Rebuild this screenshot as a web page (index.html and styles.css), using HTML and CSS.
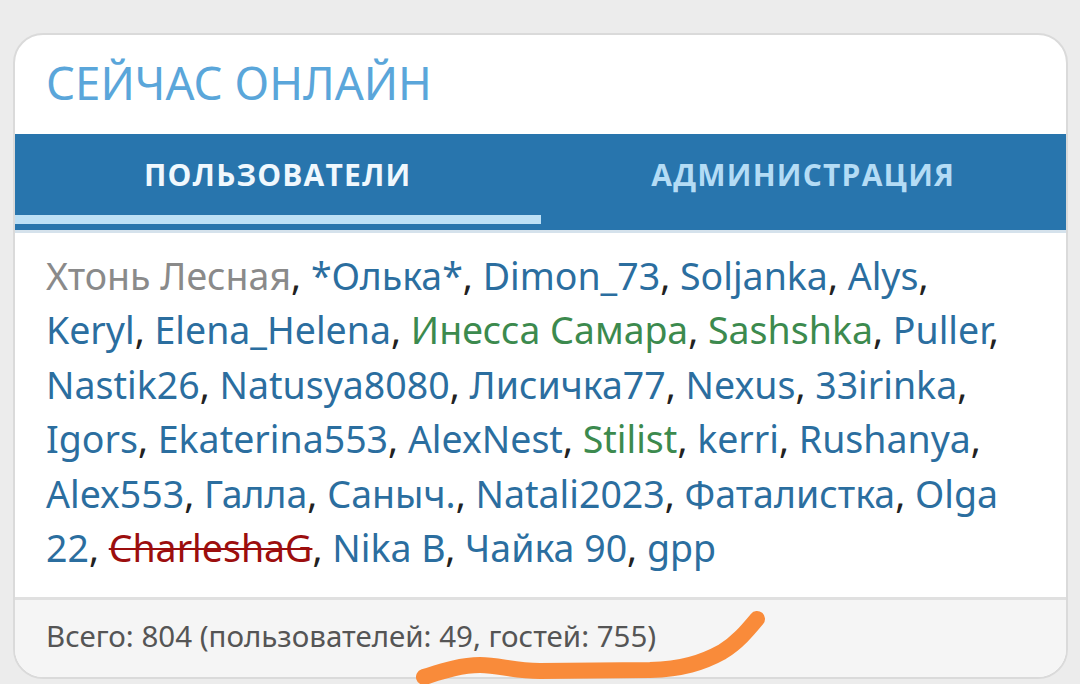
FILE: index.html
```html
<!DOCTYPE html>
<html lang="ru">
<head>
<meta charset="utf-8">
<title>Сейчас онлайн</title>
<link rel="stylesheet" href="styles.css">
</head>
<body>
<div class="card">
  <div class="title">СЕЙЧАС ОНЛАЙН</div>
  <div class="tabs">
    <div class="tab active">ПОЛЬЗОВАТЕЛИ</div>
    <div class="tab">АДМИНИСТРАЦИЯ</div>
  </div>
  <div class="list"><span class="u gray">Хтонь Лесная</span>, <span class="u">*Олька*</span>, <span class="u">Dimon_73</span>, <span class="u">Soljanka</span>, <span class="u">Alys</span>, <span class="u">Keryl</span>, <span class="u">Elena_Helena</span>, <span class="u green">Инесса Самара</span>, <span class="u green">Sashshka</span>, <span class="u">Puller</span>, <span class="u">Nastik26</span>, <span class="u">Natusya8080</span>, <span class="u">Лисичка77</span>, <span class="u">Nexus</span>, <span class="u">33irinka</span>, <span class="u">Igors</span>, <span class="u">Ekaterina553</span>, <span class="u">AlexNest</span>, <span class="u green">Stilist</span>, <span class="u">kerri</span>, <span class="u">Rushanya</span>, <span class="u">Alex553</span>, <span class="u">Галла</span>, <span class="u">Саныч.</span>, <span class="u">Natali2023</span>, <span class="u">Фаталистка</span>, <span class="u">Olga 22</span>, <span class="u banned">CharleshaG</span>, <span class="u">Nika B</span>, <span class="u">Чайка 90</span>, <span class="u">gpp</span></div>
  <div class="footer">Всего: 804 (пользователей: 49, гостей: 755)</div>
</div>
<svg class="scribble" width="1080" height="684" viewBox="0 0 1080 684">
  <path d="M424 677 C440 672 460 665 480 665 C500 665 512 671 540 671 L650 670 C682 669 702 663 722 652 C737 643 747 631 757 619" fill="none" stroke="#f98b3a" stroke-width="16" stroke-linecap="round" stroke-linejoin="round"/>
</svg>
</body>
</html>
```

FILE: styles.css
```css
html, body {
  margin: 0;
  padding: 0;
}
body {
  background: #ececec;
  width: 1080px;
  height: 684px;
  overflow: hidden;
  position: relative;
  font-family: "Noto Sans", "Open Sans", sans-serif;
}
.card {
  margin: 33px 12px 0 13px;
  height: 642px;
  background: #ffffff;
  border: 2px solid #dadada;
  border-radius: 30px;
  overflow: hidden;
  display: flex;
  flex-direction: column;
}
.title {
  height: 99px;
  flex: none;
  box-sizing: border-box;
  padding: 20px 0 0 31px;
  font-size: 45.5px;
  font-weight: 400;
  line-height: 54px;
  color: #5aa6da;
}
.tabs {
  display: flex;
  flex: none;
  background: #2875ad;
  height: 96px;
  border-bottom: 3px solid #d5e2ec;
}
.tab {
  flex: 1;
  display: flex;
  align-items: center;
  justify-content: center;
  font-family: "Open Sans", "Noto Sans", sans-serif;
  font-weight: 700;
  font-size: 30px;
  letter-spacing: 1.2px;
  color: #b4dcf5;
  padding-bottom: 15px;
}
.tab.active {
  color: #f0f8fd;
  border-bottom: 9px solid #bde0f6;
  margin-bottom: 6px;
  padding-bottom: 0;
}
.list {
  flex: 1;
  padding: 16px 31px 0 31px;
  font-size: 37.5px;
  line-height: 54.4px;
  color: #222222;
}
.u {
  color: #2b6e9f;
}
.u.gray {
  color: #8a8a8a;
}
.u.green {
  color: #3c8a4e;
}
.u.banned {
  color: #9c0e0e;
  text-decoration: line-through;
  text-decoration-thickness: 2px;
}
.footer {
  height: 80px;
  flex: none;
  box-sizing: border-box;
  border-top: 3px solid #e0e0e0;
  background: #f5f5f5;
  padding: 18px 31px 0 31px;
  font-size: 29.5px;
  line-height: 36px;
  color: #555555;
}
.scribble {
  position: absolute;
  left: 0;
  top: 0;
  pointer-events: none;
}
```
